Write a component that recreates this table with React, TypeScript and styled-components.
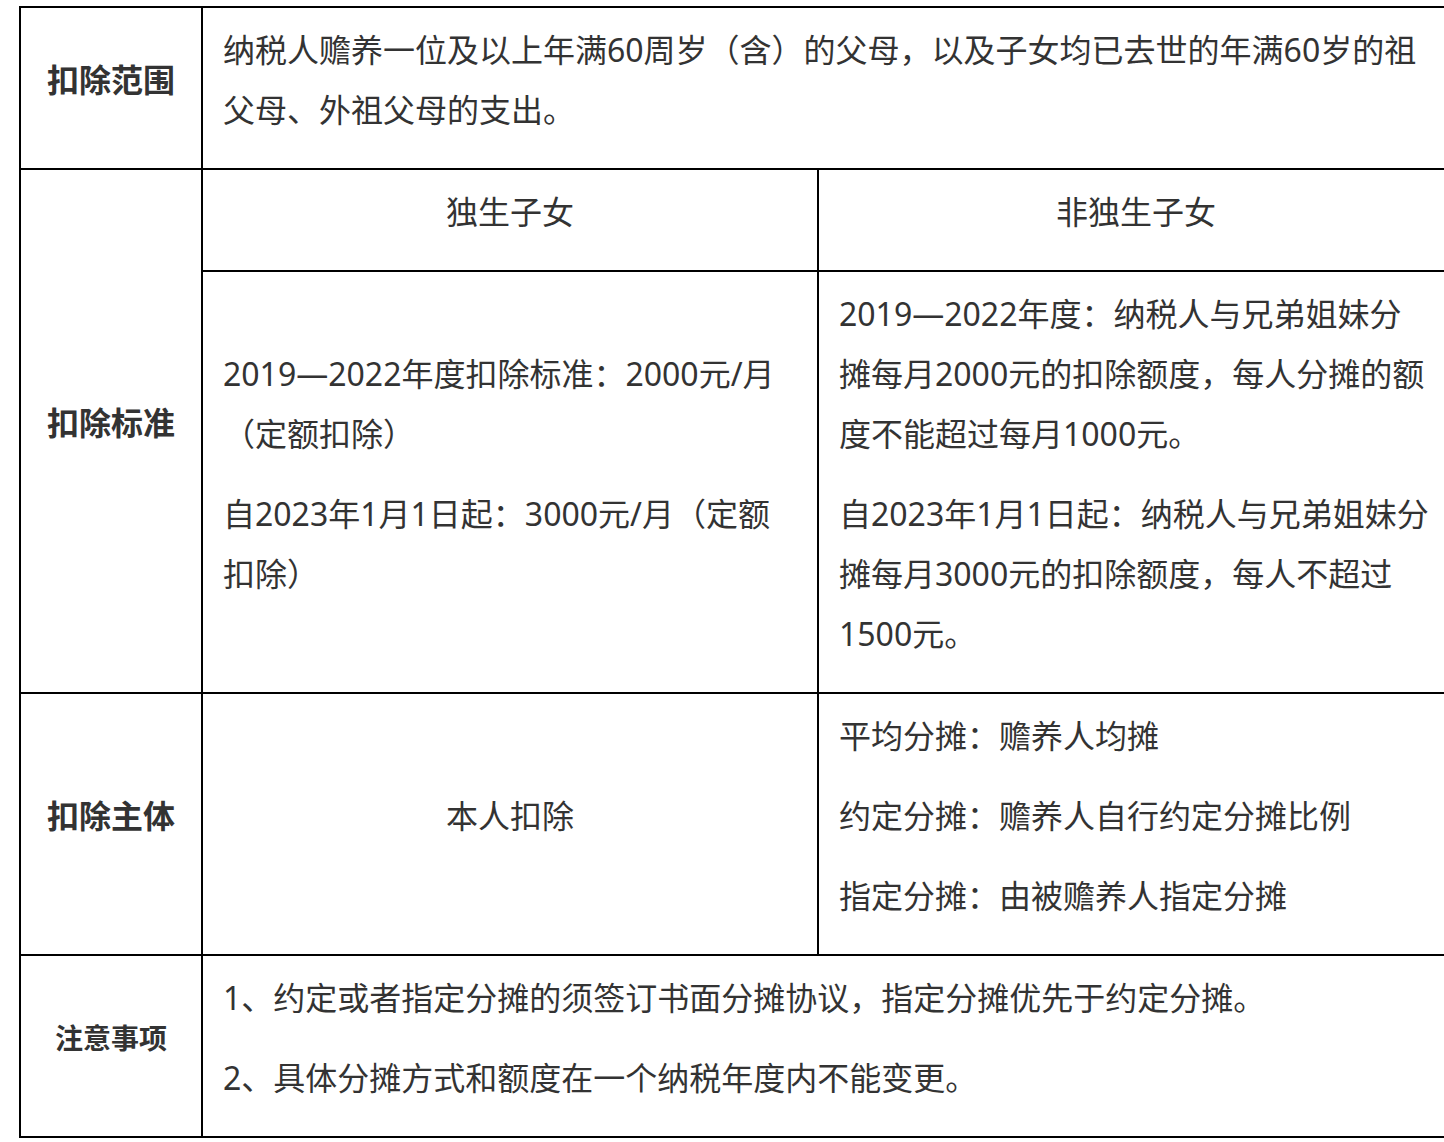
import React from "react";
import styled, { createGlobalStyle } from "styled-components";

const Global = createGlobalStyle`
  html, body { margin: 0; padding: 0; background: #fff; }
  body { overflow: hidden; }
`;

const Page = styled.div`
  padding: 6px 0 0 19px;
  width: 1600px;
`;

const Table = styled.table`
  border-collapse: separate;
  border-spacing: 0;
  table-layout: fixed;
  width: 1436px;
  border-top: 2px solid #000;
  border-left: 2px solid #000;
  font-family: "Noto Sans", "Noto Sans CJK SC", sans-serif;
  color: #333;
`;

const Cell = styled.td<{ $center?: boolean }>`
  box-sizing: border-box;
  border-right: 2px solid #000;
  border-bottom: 2px solid #000;
  padding: 12px 20px 8px;
  vertical-align: middle;
  text-align: ${(p) => (p.$center ? "center" : "left")};
  white-space: nowrap;
  font-size: 32px;
`;

const HeadCell = styled(Cell)`
  padding: 12px 0 8px;
  text-align: center;
`;

const Para = styled.p`
  margin: 0 0 20px;
  line-height: 60px;
`;

const Title = styled.p<{ $small?: boolean }>`
  margin: 0 0 20px;
  line-height: 60px;
  font-weight: 700;
  font-size: ${(p) => (p.$small ? "28px" : "32px")};
`;

export default function App() {
  return (
    <Page>
      <Global />
      <Table>
        <colgroup>
          <col style={{ width: 182 }} />
          <col style={{ width: 616 }} />
          <col style={{ width: 636 }} />
        </colgroup>
        <tbody>
          <tr>
            <HeadCell>
              <Title>扣除范围</Title>
            </HeadCell>
            <Cell colSpan={2}>
              <Para>
                纳税人赡养一位及以上年满60周岁（含）的父母，以及子女均已去世的年满60岁的祖
                <br />
                父母、外祖父母的支出。
              </Para>
            </Cell>
          </tr>
          <tr>
            <HeadCell rowSpan={2}>
              <Title>扣除标准</Title>
            </HeadCell>
            <Cell $center>
              <Para>独生子女</Para>
            </Cell>
            <Cell $center>
              <Para>非独生子女</Para>
            </Cell>
          </tr>
          <tr>
            <Cell>
              <Para>
                2019—2022年度扣除标准：2000元/月
                <br />
                （定额扣除）
              </Para>
              <Para>
                自2023年1月1日起：3000元/月（定额
                <br />
                扣除）
              </Para>
            </Cell>
            <Cell>
              <Para>
                2019—2022年度：纳税人与兄弟姐妹分
                <br />
                摊每月2000元的扣除额度，每人分摊的额
                <br />
                度不能超过每月1000元。
              </Para>
              <Para>
                自2023年1月1日起：纳税人与兄弟姐妹分
                <br />
                摊每月3000元的扣除额度，每人不超过
                <br />
                1500元。
              </Para>
            </Cell>
          </tr>
          <tr>
            <HeadCell>
              <Title>扣除主体</Title>
            </HeadCell>
            <Cell $center>
              <Para>本人扣除</Para>
            </Cell>
            <Cell>
              <Para>平均分摊：赡养人均摊</Para>
              <Para>约定分摊：赡养人自行约定分摊比例</Para>
              <Para>指定分摊：由被赡养人指定分摊</Para>
            </Cell>
          </tr>
          <tr>
            <HeadCell>
              <Title $small>注意事项</Title>
            </HeadCell>
            <Cell colSpan={2}>
              <Para>1、约定或者指定分摊的须签订书面分摊协议，指定分摊优先于约定分摊。</Para>
              <Para>2、具体分摊方式和额度在一个纳税年度内不能变更。</Para>
            </Cell>
          </tr>
        </tbody>
      </Table>
    </Page>
  );
}
